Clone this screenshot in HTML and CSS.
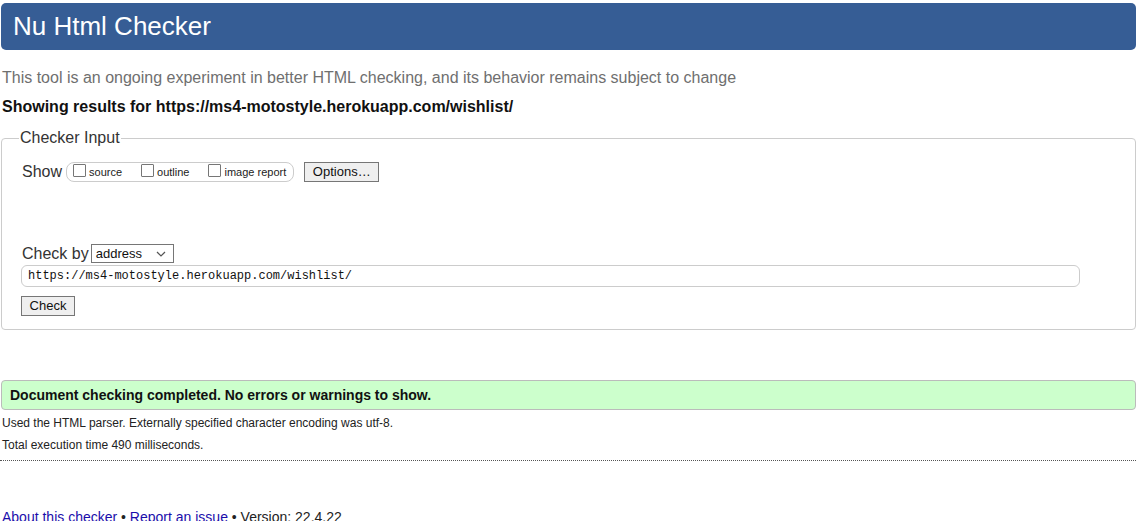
FILE: index.html
```html
<!DOCTYPE html>
<html lang="en">
<head>
<meta charset="utf-8">
<title>Nu Html Checker</title>
<link rel="stylesheet" href="styles.css">
</head>
<body>
<div class="page">
  <h1 class="banner">Nu Html Checker</h1>
  <p class="desc">This tool is an ongoing experiment in better HTML checking, and its behavior remains subject to change</p>
  <p class="results">Showing results for https://ms4-motostyle.herokuapp.com/wishlist/</p>
  <fieldset class="input">
    <legend>Checker Input</legend>
    <div class="show-row">
      <span class="lbl">Show</span>
      <span class="opts">
        <label><span class="cb"></span>source</label>
        <label><span class="cb"></span>outline</label>
        <label><span class="cb"></span>image report</label>
      </span>
      <span class="btn opt-btn">Options…</span>
    </div>
    <div class="by-row">
      <span class="lbl">Check by</span>
      <span class="select">address<svg class="chev" viewBox="0 0 10 6" width="10" height="6"><path d="M1 1l4 4 4-4" fill="none" stroke="#555" stroke-width="1.2"/></svg></span>
    </div>
    <div class="url">https://ms4-motostyle.herokuapp.com/wishlist/</div>
    <div class="check-row"><span class="btn check-btn">Check</span></div>
  </fieldset>
  <div class="success">Document checking completed. No errors or warnings to show.</div>
  <p class="detail">Used the HTML parser. Externally specified character encoding was utf-8.</p>
  <p class="detail">Total execution time 490 milliseconds.</p>
  <hr class="sep">
  <p class="footer"><a href="#">About this checker</a> • <a href="#">Report an issue</a> • Version: 22.4.22</p>
</div>
</body>
</html>
```
FILE: styles.css
```css
html, body {
  margin: 0;
  padding: 0;
  background: #fff;
}
body {
  font-family: "Liberation Sans", Arial, sans-serif;
  color: #222;
}
.page {
  padding: 3px 3px 0 1px;
}
.banner {
  margin: 0;
  height: 47px;
  line-height: 46px;
  background: #365d95;
  color: #fff;
  border-radius: 5px;
  font-size: 26px;
  font-weight: normal;
  padding-left: 12px;
}
.desc {
  margin: 19px 0 0 1px;
  font-size: 16px;
  line-height: 18px;
  color: #6f6f6f;
}
.results {
  margin: 11px 0 0 1px;
  font-size: 16px;
  line-height: 18px;
  font-weight: bold;
  color: #111;
}
.input {
  margin: 13px 0 0 0;
  padding: 15px 19px 13px 19px;
  border: 1px solid #ccc;
  border-radius: 4px;
}
.input legend {
  padding: 0 1px;
  margin-left: -2px;
  font-size: 16px;
  color: #333;
}
.lbl {
  font-size: 16px;
  color: #333;
}
.show-row {
  display: flex;
  align-items: center;
  margin-left: 1px;
}
.opts {
  display: inline-flex;
  align-items: center;
  height: 18px;
  margin-left: 4px;
  padding: 0 7px 0 6px;
  border: 1px solid #ccc;
  border-radius: 8px;
  gap: 19px;
}
.opts label {
  display: inline-flex;
  align-items: center;
  font-size: 11px;
  color: #222;
}
.cb {
  display: inline-block;
  width: 11px;
  height: 11px;
  border: 1px solid #767676;
  border-radius: 1px;
  margin-right: 3px;
  position: relative;
  top: -2px;
}
.btn {
  display: inline-block;
  box-sizing: border-box;
  background: #efefef;
  border: 1px solid #767676;
  font-size: 13px;
  color: #111;
  text-align: center;
}
.opt-btn {
  margin-left: 10px;
  width: 75px;
  height: 20px;
  line-height: 18px;
}
.by-row {
  display: flex;
  align-items: center;
  margin: 62px 0 0 1px;
}
.select {
  display: inline-flex;
  align-items: center;
  justify-content: space-between;
  box-sizing: border-box;
  width: 83px;
  height: 19px;
  margin-left: 2px;
  padding: 0 7px 0 4px;
  border: 1px solid #767676;
  font-size: 13px;
  color: #111;
}
.url {
  box-sizing: border-box;
  height: 22px;
  margin: 2px 36px 0 0;
  padding: 0 6px;
  border: 1px solid #ccc;
  border-radius: 6px;
  font-family: "Liberation Mono", "Courier New", monospace;
  font-size: 12px;
  line-height: 20px;
  color: #111;
}
.check-row {
  margin-top: 9px;
}
.check-btn {
  width: 54px;
  height: 20px;
  line-height: 18px;
}
.success {
  margin-top: 50px;
  box-sizing: border-box;
  height: 30px;
  line-height: 28px;
  padding-left: 8px;
  background: #ccffcc;
  border: 1px solid #bbb;
  border-radius: 4px;
  font-size: 14px;
  font-weight: bold;
  color: #111;
}
.detail {
  margin: 6px 0 0 1px;
  font-size: 12px;
  line-height: 15px;
  color: #222;
}
.detail + .detail {
  margin-top: 6px;
  line-height: 16px;
}
.sep {
  margin: 7px 0 0 -1px;
  border: 0;
  border-top: 1px dotted #555;
}
.footer {
  margin: 48px 0 0 1px;
  font-size: 14px;
  color: #222;
}
.footer a {
  color: #1a0dab;
  text-decoration: underline;
}
```
